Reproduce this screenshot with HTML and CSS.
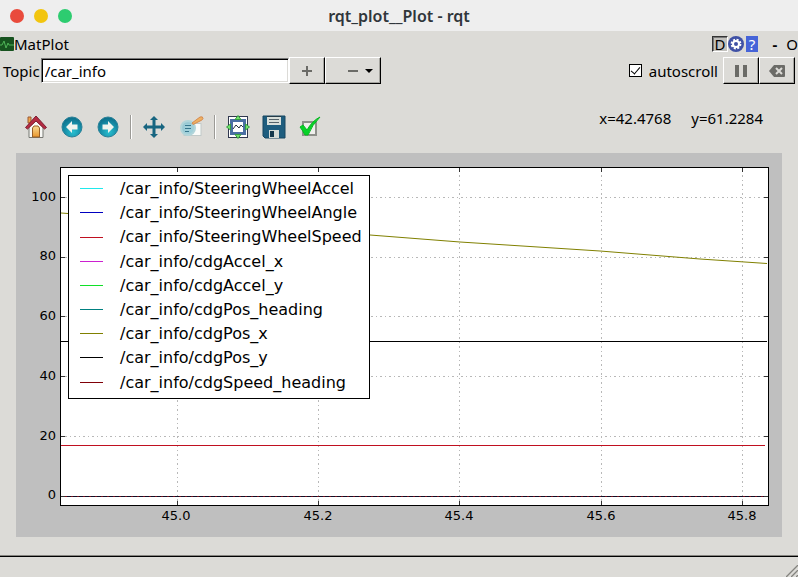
FILE: index.html
```html
<!DOCTYPE html>
<html lang="en">
<head>
<meta charset="utf-8">
<title>rqt_plot__Plot - rqt</title>
<link rel="stylesheet" href="styles.css">
</head>
<body>
<header class="titlebar">
  <div class="lights">
    <button class="light close" aria-label="Close"></button>
    <button class="light minimize" aria-label="Minimize"></button>
    <button class="light maximize" aria-label="Maximize"></button>
  </div>
  <h1>rqt_plot__Plot - rqt</h1>
</header>

<main>
  <section class="dock-title">
    <svg class="dock-icon" width="14" height="14" viewBox="0 0 14 14"><rect width="14" height="14" rx="1" fill="#17531f"/><path d="M0 8H2L4 4L6 11L8 6L9 8H14" fill="none" stroke="#4fb457"/></svg>
    <h2>MatPlot</h2>
    <div class="dock-actions">
      <button class="dock-d" aria-label="Toggle dock">D</button>
      <button class="bare" aria-label="Settings"><svg width="16" height="16" viewBox="0 0 16 16"><circle cx="8" cy="8" r="8" fill="#3f51a5"/><circle cx="8" cy="8" r="4.4" fill="none" stroke="#fff" stroke-width="2" stroke-dasharray="2 1.455"/><circle cx="8" cy="8" r="3" fill="none" stroke="#fff" stroke-width="2"/></svg></button>
      <button class="help" aria-label="Help">?</button>
      <button class="bare dash" aria-label="Minimize dock">-</button>
      <button class="bare float" aria-label="Float dock">O</button>
    </div>
  </section>

  <form class="topic-row">
    <label for="topic">Topic</label>
    <input id="topic" class="topic" type="text" value="/car_info">
    <button type="button" class="raised" aria-label="Add topic"><svg width="12" height="12" viewBox="0 0 12 12"><path d="M6 1V11M1 6H11" stroke="#6b6b67" stroke-width="2"/></svg></button>
    <button type="button" class="raised wide" aria-label="Remove topic"><svg width="12" height="12" viewBox="0 0 12 12"><path d="M1 6H11" stroke="#6b6b67" stroke-width="2"/></svg><svg width="8" height="4" viewBox="0 0 8 4"><path d="M0 0H8L4 4Z"/></svg></button>
    <span class="spacer"></span>
    <input id="autoscroll" class="check" type="checkbox" checked>
    <label for="autoscroll" class="check-label">autoscroll</label>
    <button type="button" class="raised" aria-label="Pause"><svg width="12" height="12" viewBox="0 0 12 12"><path d="M0 0H4V12H0ZM8 0H12V12H8Z" fill="#6b6b67"/></svg></button>
    <button type="button" class="raised" aria-label="Clear"><svg width="16" height="12" viewBox="0 0 16 12"><path d="M5 0H15Q16 0 16 1V11Q16 12 15 12H5L0 6Z" fill="#6b6b67"/><path d="M7 3L13 9M13 3L7 9" stroke="#dcdbd7" stroke-width="2"/></svg></button>
  </form>

  <nav class="toolbar" aria-label="Plot tools">
    <svg width="0" height="0" class="defs">
      <defs>
        <radialGradient id="ball" cx=".55" cy=".75" r=".75"><stop offset="0" stop-color="#28bfd0"/><stop offset=".6" stop-color="#168ba5"/><stop offset="1" stop-color="#0c6c87"/></radialGradient>
        <linearGradient id="door" x2="0" y2="1"><stop offset="0" stop-color="#f9dc95"/><stop offset="1" stop-color="#e9952b"/></linearGradient>
      </defs>
    </svg>
    <button class="tool" aria-label="Home"><svg viewBox="0 0 24 24"><path d="M4 2H7V8H4Z" fill="#f1a44b" stroke="#9c5b32"/><path d="M5 12L12 5L19 12V22.500H5Z" fill="#f8f8f5" stroke="#777873"/><path d="M8.500 22V13L10 11H14L15.500 13V22Z" fill="url(#door)" stroke="#985e25"/><path d="M1.500 12.500L12 1L22.500 12.500L20.500 14L12 6L3.500 14Z" fill="#b52b42" stroke="#7c1f32"/></svg></button>
    <button class="tool" aria-label="Back"><svg viewBox="0 0 24 24"><circle cx="12" cy="12" r="10" fill="url(#ball)" stroke="#2a8198"/><path d="M6 12L12 6V9.500H17.500V14.500H12V18Z" fill="#f0f4ee"/></svg></button>
    <button class="tool" aria-label="Forward"><svg viewBox="0 0 24 24"><circle cx="12" cy="12" r="10" fill="url(#ball)" stroke="#2a8198"/><path d="M18 12L12 6V9.500H6.500V14.500H12V18Z" fill="#f0f4ee"/></svg></button>
    <span class="separator"></span>
    <button class="tool" aria-label="Pan"><svg viewBox="0 0 24 24"><path d="M12 1L16 5H13.500V10.500H19V8L23 12L19 16V13.500H13.500V19H16L12 23L8 19H10.500V13.500H5V16L1 12L5 8V10.500H10.500V5H8Z" fill="#176580"/></svg></button>
    <span class="gap"></span>
    <button class="tool" aria-label="Zoom"><svg viewBox="0 0 24 24"><rect x="4" y="8.500" width="17" height="12" fill="#fafbf9" stroke="#c1cac9"/><circle cx="8" cy="13" r="7" fill="#8fc8d5" fill-opacity=".85" stroke="#b1d5da" stroke-width="2"/><path d="M5 10.500H11M5 13.500H11M5 16.500H9" stroke="#35758c"/><path d="M12 8L20 2Q23 1 23 3.500Q23 4.500 21 5.500L13 9.500Z" fill="#eeb162" stroke="#d58a50"/></svg></button>
    <span class="separator"></span>
    <button class="tool" aria-label="Subplots"><svg viewBox="0 0 24 24"><rect x="2.500" y="1.500" width="19" height="21" fill="#fff" stroke="#31384f"/><rect x="5.500" y="5.500" width="13" height="13" fill="#fff" stroke="#4b6fa3" stroke-width="3"/><path d="M7 14L10 10L13 13L15 10L17 12" fill="none" stroke="#26323c"/><path d="M12 .5L15 4.500H9ZM12 23.500L15 19.500H9ZM.5 12L4.500 9V15ZM23.500 12L19.500 9V15Z" fill="#73e26c" stroke="#369b42"/></svg></button>
    <button class="tool" aria-label="Save"><svg viewBox="0 0 24 24"><path d="M1 1H23V23H3L1 21Z" fill="#1e5d7e" stroke="#174660"/><rect x="5" y="1" width="14" height="9" fill="#d9dfda"/><path d="M5 1.500H19" stroke="#263b47"/><path d="M7 4.500H17M7 7.500H17" stroke="#55636a"/><path d="M7 15H17V23H7Z" fill="#d6dcd7"/><rect x="8" y="16" width="4" height="6" fill="#14384c"/></svg></button>
    <button class="tool" aria-label="Customize"><svg viewBox="0 0 24 24"><rect x="5" y="7" width="13" height="13" fill="#efefec" stroke="#8e908a" stroke-width="2"/><path d="M2 12L5 10L9 15Q14 6 22 2Q14 10 10 20H7Q5 16 2 12Z" fill="#08d229" stroke="#06b921"/></svg></button>
    <output class="coords"><span>x=42.4768</span><span>y=61.2284</span></output>
  </nav>

  <figure class="canvas">
    <svg viewBox="0 0 766 384" role="img" aria-label="Plot of car_info values over time">
      <rect x="44.500" y="14.500" width="708" height="338" fill="#fff"/>
      <path class="grid" d="M45 44.500H752M45 104.500H752M45 163.500H752M45 223.500H752M45 283.500H752M45 343.500H752M161.500 352V15M302.500 352V15M443.500 352V15M585.500 352V15M726.500 352V15"/>
      <path class="line" stroke="#808000" d="M45 60L354 82L444 89L584 98L684 106L751 110.500"/>
      <path class="line" stroke="#000" d="M45 188.500H751"/>
      <path class="line" stroke="#c01020" d="M45 292.500H749"/>
      <path class="line" stroke="#700b18" d="M45 343.500H752"/>
      <path class="line zero" stroke="#101028" d="M45 343.500H752"/>
      <path class="tick" d="M45 44.500h4M45 104.500h4M45 163.500h4M45 223.500h4M45 283.500h4M45 343.500h4M752 44.500h-4M752 104.500h-4M752 163.500h-4M752 223.500h-4M752 283.500h-4M752 343.500h-4M161.500 352v-4M302.500 352v-4M443.500 352v-4M585.500 352v-4M726.500 352v-4M161.500 15v4M302.500 15v4M443.500 15v4M585.500 15v4M726.500 15v4"/>
      <rect class="frame" x="44.500" y="14.500" width="708" height="338"/>
      <g class="axis y-axis">
        <text x="40" y="48">100</text><text x="40" y="107">80</text><text x="40" y="167">60</text><text x="40" y="227">40</text><text x="40" y="287">20</text><text x="40" y="346">0</text>
      </g>
      <g class="axis x-axis">
        <text x="160" y="367">45.0</text><text x="302" y="367">45.2</text><text x="443" y="367">45.4</text><text x="585" y="367">45.6</text><text x="726" y="367">45.8</text>
      </g>
      <g class="legend">
        <rect x="52.500" y="22.500" width="301" height="223" fill="#fff" stroke="#000"/>
        <path stroke="#20e8ec" d="M64 35.500h23"/><text x="104" y="41">/car_info/SteeringWheelAccel</text>
        <path stroke="#0000c0" d="M64 59.500h23"/><text x="104" y="65">/car_info/SteeringWheelAngle</text>
        <path stroke="#c01020" d="M64 84.500h23"/><text x="104" y="89">/car_info/SteeringWheelSpeed</text>
        <path stroke="#cc20d0" d="M64 108.500h23"/><text x="104" y="114">/car_info/cdgAccel_x</text>
        <path stroke="#10e028" d="M64 132.500h23"/><text x="104" y="138">/car_info/cdgAccel_y</text>
        <path stroke="#008080" d="M64 156.500h23"/><text x="104" y="162">/car_info/cdgPos_heading</text>
        <path stroke="#808000" d="M64 180.500h23"/><text x="104" y="186">/car_info/cdgPos_x</text>
        <path stroke="#000" d="M64 204.500h23"/><text x="104" y="210">/car_info/cdgPos_y</text>
        <path stroke="#800008" d="M64 229.500h23"/><text x="104" y="235">/car_info/cdgSpeed_heading</text>
      </g>
    </svg>
  </figure>
</main>

<footer class="statusbar">
  <svg width="14" height="14" viewBox="0 0 14 14"><path d="M1 14L14 1M6 14L14 6M11 14L14 11" stroke="#fff"/><path d="M2 14L14 2M7 14L14 7M12 14L14 12" stroke="#85847f" stroke-width="1.500"/></svg>
</footer>
</body>
</html>
```
FILE: styles.css
```css
* { box-sizing: border-box; }

body {
  margin: 0;
  min-height: 100vh;
  display: flex;
  flex-direction: column;
  background: #dcdbd7;
  color: #000;
  font: 15px/20px "Noto Sans", "Open Sans", sans-serif;
}

button, input { font: inherit; color: inherit; margin: 0; }
button { padding: 0; border: 0; background: none; }
svg { display: block; }

.titlebar {
  display: grid;
  grid-template-columns: 1fr auto 1fr;
  align-items: center;
  height: 31px;
  padding: 0 10px;
  background: #eee;
}
.titlebar h1 { margin: 0; font-size: 16px; font-weight: 600; color: #30363b; }
.lights { display: flex; gap: 10px; }
.light { width: 14px; height: 14px; border-radius: 50%; }
.close { background: #e94b3c; }
.minimize { background: #f2c50f; }
.maximize { background: #2dcc70; }

main { flex: 1; }

.dock-title { display: flex; align-items: center; height: 26px; overflow: hidden; }
.dock-title h2 { margin: 0; font-size: 15px; font-weight: 400; }
.dock-actions { display: flex; align-items: center; margin-left: auto; }
.dock-d {
  width: 16px;
  height: 16px;
  line-height: 14px;
  background: #c2c1bd;
  border: 1px solid;
  border-color: #333 #fff #fff #333;
  box-shadow: inset 1px 1px #777;
}
.help {
  width: 12px;
  height: 16px;
  margin-left: 2px;
  line-height: 16px;
  background: #4664d8;
  color: #fff;
}
.dash { width: 6px; margin-left: 14px; font-weight: 700; }
.float { margin: 0 0 0 8px; width: 12px; }

.topic-row { display: flex; align-items: center; height: 27px; padding: 0 3px; }
.topic {
  flex: 0 1 248px;
  min-width: 0;
  height: 25px;
  padding: 0 3px;
  margin-left: 1px;
  background: #fff;
  border: 1px solid;
  border-color: #777 #fff #fff #777;
  box-shadow: inset 1px 1px #000, inset -1px -1px #dcdbd7;
  outline: 0;
}
.raised {
  display: flex;
  align-items: center;
  justify-content: center;
  width: 36px;
  height: 27px;
  border: 1px solid;
  border-color: #fff #000 #000 #fff;
  box-shadow: inset -1px -1px #a5a49f;
}
.wide { width: 56px; gap: 6px; padding-left: 14px; }
.spacer { flex: 1; }
.check {
  appearance: none;
  width: 13px;
  height: 13px;
  background: #fff;
  border: 1px solid #000;
}
.check:checked::before {
  content: "";
  display: block;
  width: 8px;
  height: 4px;
  margin: 2px 1px;
  border: solid #000;
  border-width: 0 0 1px 1px;
  transform: rotate(-50deg);
}
.check-label { margin: 0 5px 0 7px; }

.toolbar { display: flex; align-items: center; height: 69px; padding: 17px 35px 0 18px; }
.defs { position: absolute; }
.tool { width: 36px; padding: 0 6px; }
.tool svg { width: 24px; height: 24px; }
.separator { width: 2px; height: 24px; margin: 0 4px; border-left: 1px solid #9b9a96; border-right: 1px solid #fff; }
.gap { width: 2px; }
.coords { display: flex; gap: 20px; margin: 0 0 18px auto; }

.canvas { margin: 0 16px 18px; background: #bfbfbf; }
.canvas svg { width: 100%; height: auto; }
.canvas text { font-family: "DejaVu Sans", sans-serif; }
.grid { stroke: #b8b8b8; stroke-dasharray: 1 3 2 3; fill: none; }
.line { fill: none; }
.zero { stroke-dasharray: 4 2; }
.tick { stroke: #333; }
.frame { fill: none; stroke: #000; }
.axis { font-size: 13px; }
.y-axis { text-anchor: end; }
.x-axis { text-anchor: middle; }
.legend { font-size: 16px; }

.statusbar {
  display: flex;
  justify-content: flex-end;
  align-items: flex-end;
  height: 22px;
  border-top: 1px solid #85847f;
  box-shadow: inset 0 1px #000;
}
```
